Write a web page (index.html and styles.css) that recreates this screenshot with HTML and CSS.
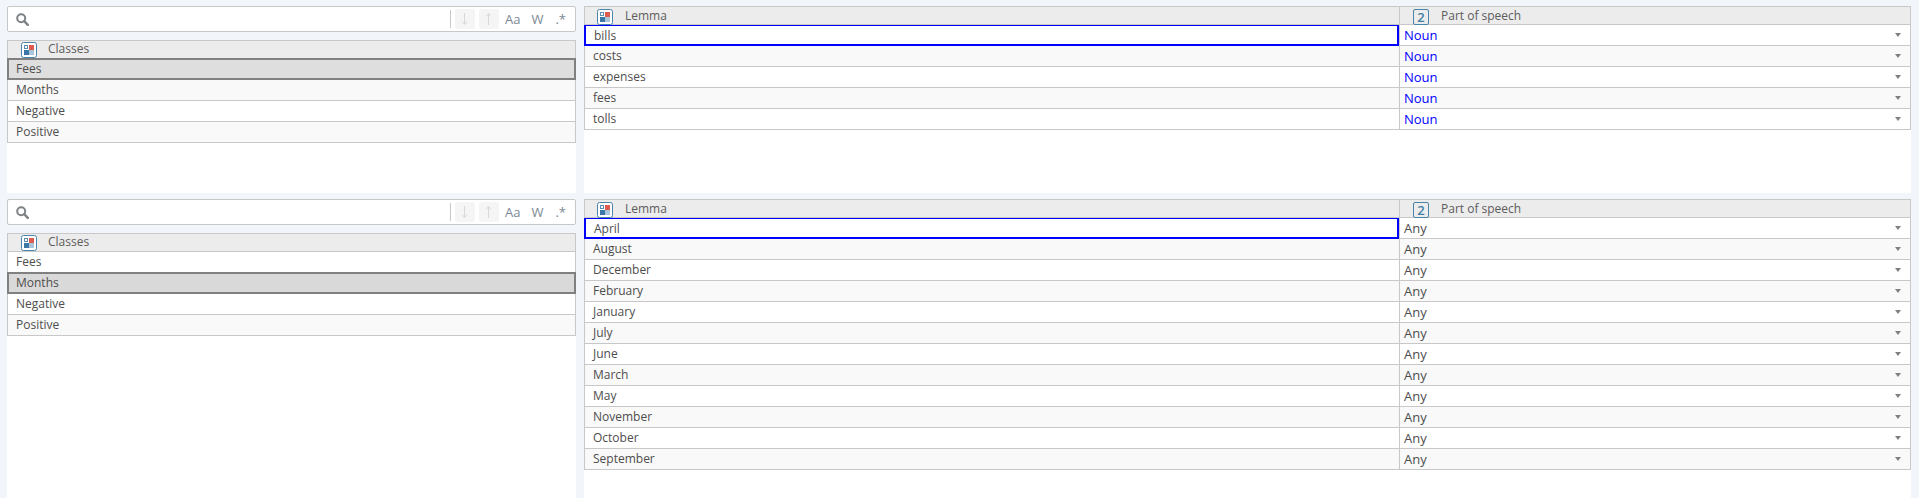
FILE: index.html
```html
<!DOCTYPE html>
<html lang="en">
<head>
    <meta charset="UTF-8">
    <title>Lexicon classes</title>
    <link rel="stylesheet" href="styles.css">
</head>
<body>
    <svg class="icon-defs" width="0" height="0">
        <symbol id="class-icon" viewBox="0 0 16 16">
            <rect x="0.5" y="0.5" width="15" height="15" rx="2" fill="#fff" stroke="#4a84ab"/>
            <rect x="3.5" y="3.5" width="3" height="3" fill="#fff" stroke="#5a8db3"/>
            <rect x="8" y="3" width="5" height="5" fill="#dd5a50"/>
            <rect x="3" y="8" width="5" height="5" fill="#3c78a6"/>
            <rect x="8" y="8" width="5" height="5" fill="#a9c5d9"/>
        </symbol>
        <symbol id="search-icon" viewBox="0 0 13 13">
            <circle cx="5.2" cy="5.2" r="4" fill="none" stroke="#7d8285" stroke-width="2"/>
            <path d="M8.2 8.2l3.6 3.6" stroke="#7d8285" stroke-width="2.4" stroke-linecap="round"/>
        </symbol>
        <symbol id="arrow-icon" viewBox="0 0 7 12">
            <path d="M3.5 0v11M1 8.5l2.5 3 2.5-3" fill="none" stroke="#d8d8d8"/>
        </symbol>
    </svg>

    <div class="page">
        <div class="pane side">
            <div class="search-box">
                <svg class="search-icon"><use href="#search-icon"/></svg>
                <div class="search-tools">
                    <span class="tool-btn"><svg class="arrow"><use href="#arrow-icon"/></svg></span>
                    <span class="tool-btn"><svg class="arrow up"><use href="#arrow-icon"/></svg></span>
                    <span class="tool-text aa">Aa</span>
                    <span class="tool-text w">W</span>
                    <span class="tool-text regex">.*</span>
                </div>
            </div>
            <div class="list">
                <div class="head"><svg class="head-icon"><use href="#class-icon"/></svg><span class="head-text">Classes</span></div>
                <div class="row selected first">Fees</div>
                <div class="row alt">Months</div>
                <div class="row">Negative</div>
                <div class="row alt">Positive</div>
            </div>
        </div>

        <div class="pane main">
            <div class="head cols">
                <div class="head-cell"><svg class="head-icon"><use href="#class-icon"/></svg><span class="head-text">Lemma</span></div>
                <div class="head-cell pos"><span class="num-icon">2</span><span class="head-text">Part of speech</span></div>
            </div>
            <div class="row cols"><div class="cell active">bills</div><div class="cell pick noun">Noun</div></div>
            <div class="row cols alt"><div class="cell">costs</div><div class="cell pick noun">Noun</div></div>
            <div class="row cols"><div class="cell">expenses</div><div class="cell pick noun">Noun</div></div>
            <div class="row cols alt"><div class="cell">fees</div><div class="cell pick noun">Noun</div></div>
            <div class="row cols"><div class="cell">tolls</div><div class="cell pick noun">Noun</div></div>
        </div>

        <div class="pane side">
            <div class="search-box">
                <svg class="search-icon"><use href="#search-icon"/></svg>
                <div class="search-tools">
                    <span class="tool-btn"><svg class="arrow"><use href="#arrow-icon"/></svg></span>
                    <span class="tool-btn"><svg class="arrow up"><use href="#arrow-icon"/></svg></span>
                    <span class="tool-text aa">Aa</span>
                    <span class="tool-text w">W</span>
                    <span class="tool-text regex">.*</span>
                </div>
            </div>
            <div class="list">
                <div class="head"><svg class="head-icon"><use href="#class-icon"/></svg><span class="head-text">Classes</span></div>
                <div class="row">Fees</div>
                <div class="row selected">Months</div>
                <div class="row">Negative</div>
                <div class="row alt">Positive</div>
            </div>
        </div>

        <div class="pane main">
            <div class="head cols">
                <div class="head-cell"><svg class="head-icon"><use href="#class-icon"/></svg><span class="head-text">Lemma</span></div>
                <div class="head-cell pos"><span class="num-icon">2</span><span class="head-text">Part of speech</span></div>
            </div>
            <div class="row cols"><div class="cell active">April</div><div class="cell pick">Any</div></div>
            <div class="row cols alt"><div class="cell">August</div><div class="cell pick">Any</div></div>
            <div class="row cols"><div class="cell">December</div><div class="cell pick">Any</div></div>
            <div class="row cols alt"><div class="cell">February</div><div class="cell pick">Any</div></div>
            <div class="row cols"><div class="cell">January</div><div class="cell pick">Any</div></div>
            <div class="row cols alt"><div class="cell">July</div><div class="cell pick">Any</div></div>
            <div class="row cols"><div class="cell">June</div><div class="cell pick">Any</div></div>
            <div class="row cols alt"><div class="cell">March</div><div class="cell pick">Any</div></div>
            <div class="row cols"><div class="cell">May</div><div class="cell pick">Any</div></div>
            <div class="row cols alt"><div class="cell">November</div><div class="cell pick">Any</div></div>
            <div class="row cols"><div class="cell">October</div><div class="cell pick">Any</div></div>
            <div class="row cols alt"><div class="cell">September</div><div class="cell pick">Any</div></div>
        </div>
    </div>
</body>
</html>
```

FILE: styles.css
```css
* {
    margin: 0;
    padding: 0;
    box-sizing: border-box;
}

html, body {
    height: 100%;
    overflow: hidden;
}

body {
    font-family: 'Open Sans', 'Liberation Sans', sans-serif;
    font-size: 12px;
    color: #4d4d4d;
    background: #f2f5fa;
}

.icon-defs {
    position: absolute;
}

.page {
    display: grid;
    grid-template-columns: 569px 1fr;
    grid-template-rows: 187px 299px;
    column-gap: 8px;
    row-gap: 6px;
    padding: 6px 8px 0 7px;
}

.pane {
    min-width: 0;
}

.pane.main {
    background: #fff;
}

.side {
    display: flex;
    flex-direction: column;
}

.search-box {
    display: flex;
    align-items: center;
    justify-content: space-between;
    height: 26px;
    margin-bottom: 8px;
    padding-left: 8px;
    background: #fff;
    border: 1px solid #c8c8c8;
    border-radius: 2px;
}

.search-icon {
    width: 13px;
    height: 13px;
}

.search-tools {
    display: flex;
    align-items: center;
    height: 100%;
    padding-right: 9px;
}

.search-tools::before {
    content: '';
    width: 1px;
    height: 18px;
    margin-right: 4px;
    background: #c8c8c8;
}

.tool-btn {
    display: flex;
    align-items: center;
    justify-content: center;
    width: 20px;
    height: 20px;
    margin-right: 4px;
    background: #f5f5f5;
    border-radius: 2px;
}

.arrow {
    width: 7px;
    height: 12px;
}

.arrow.up {
    transform: rotate(180deg);
}

.tool-text {
    color: #7c8894;
    font-size: 13px;
}

.aa {
    margin: 0 11px 0 2px;
}

.w {
    margin-right: 12px;
}

.list {
    flex: 1;
    background: #fff;
}

.head {
    display: flex;
    align-items: center;
    height: 19px;
    padding-left: 13px;
    color: #5c5c5c;
    background: #ececec;
    border: 1px solid #c8c8c8;
}

.head-icon {
    flex: none;
    width: 16px;
    height: 16px;
    margin-right: 12px;
}

.list .head-icon {
    margin-right: 11px;
}

.head-text {
    padding-bottom: 2px;
}

.row {
    height: 21px;
    padding: 0 8px;
    line-height: 20px;
    background: #fff;
    border: 1px solid #c8c8c8;
    border-top: 0;
}

.row.alt {
    background: #f9f9f9;
}

.row.selected {
    height: 22px;
    margin-top: -1px;
    line-height: 18px;
    background: #d9d9d9;
    border: 2px solid #808080;
    padding: 0 7px;
}

.row.selected.first {
    background: #dedede;
}

.cols {
    display: grid;
    grid-template-columns: 814px 1fr;
    padding: 0;
}

.head.cols {
    padding: 0;
}

.head-cell {
    display: flex;
    align-items: center;
    padding-left: 12px;
}

.head-cell.pos {
    padding-left: 13px;
    border-left: 1px solid #c8c8c8;
}

.num-icon {
    flex: none;
    width: 16px;
    height: 16px;
    margin-right: 12px;
    color: #3f7ea6;
    font-size: 13px;
    font-weight: 600;
    line-height: 14px;
    text-align: center;
    border: 1px solid #4a84ab;
    border-radius: 2px;
}

.cell {
    padding: 0 8px;
    min-width: 0;
}

.cell.active {
    height: 21px;
    margin: 0 0 -1px -1px;
    padding-left: 8px;
    line-height: 19px;
    border: 2px solid #0000ff;
    border-top-width: 1px;
}

.pick {
    position: relative;
    padding-left: 4px;
    font-size: 13px;
    line-height: 21px;
    border-left: 1px solid #c8c8c8;
}

.pick::after {
    content: '';
    position: absolute;
    top: 8px;
    right: 9px;
    border-top: 4px solid #808080;
    border-left: 3.5px solid transparent;
    border-right: 3.5px solid transparent;
}

.noun {
    color: #0000ff;
}
```
